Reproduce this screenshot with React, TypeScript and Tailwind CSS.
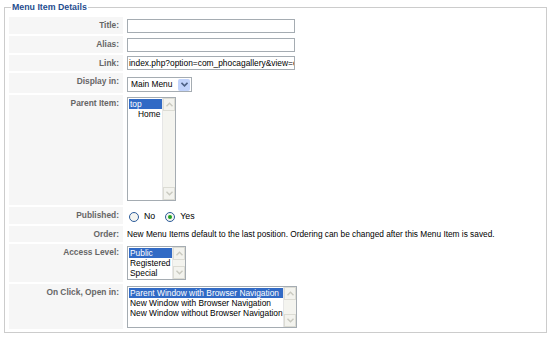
import React from "react";

const sans = { fontFamily: "'Liberation Sans', Arial, sans-serif" };

function Row({ label, h, children }: { label: string; h: string; children?: React.ReactNode }) {
  return (
    <div className={`flex ${h}`}>
      <div className="w-[114px] shrink-0 bg-[#f6f6f6] pr-[4px] pt-[3px] text-right text-[8.4px] font-bold leading-[11px] text-[#666]">
        {label}
      </div>
      <div className="flex flex-1 items-start pl-[4px] pt-[2px]">{children}</div>
    </div>
  );
}

function ScrollBar() {
  return (
    <div className="flex w-[13px] shrink-0 flex-col border-l border-[#e6e6e6] bg-[#f4f4ef]">
      <div className="flex h-[13px] items-center justify-center border border-[#dcdcd4] bg-[#f3f3ee]">
        <svg width="7" height="5" viewBox="0 0 7 5"><path d="M0.5 4.2 L3.5 1.2 L6.5 4.2" stroke="#c9c9bf" strokeWidth="1.4" fill="none" /></svg>
      </div>
      <div className="flex-1" />
      <div className="flex h-[13px] items-center justify-center border border-[#dcdcd4] bg-[#f3f3ee]">
        <svg width="7" height="5" viewBox="0 0 7 5"><path d="M0.5 0.8 L3.5 3.8 L6.5 0.8" stroke="#c9c9bf" strokeWidth="1.4" fill="none" /></svg>
      </div>
    </div>
  );
}

function ListBox({ w, h, items }: { w: string; h: string; items: { t: string; sel?: boolean; indent?: boolean }[] }) {
  return (
    <div className={`flex ${w} ${h} border border-[#a5acb2] bg-white`}>
      <div className="flex-1 whitespace-nowrap pl-[1px] pt-[1px] text-[8.4px] leading-[10px] text-black">
        {items.map((it) => (
          <div
            key={it.t}
            className={`${it.sel ? "bg-[#316ac5] text-white" : ""} ${it.indent ? "pl-[9px]" : "pl-[1px]"}`}
          >
            {it.t}
          </div>
        ))}
      </div>
      <ScrollBar />
    </div>
  );
}

function TextInput({ value }: { value?: string }) {
  return (
    <div className="h-[14px] w-[168px] overflow-hidden whitespace-nowrap border border-[#a5acb2] bg-white pl-[1px] text-[8.4px] leading-[12px] text-black">
      {value}
    </div>
  );
}

function Radio({ checked }: { checked?: boolean }) {
  return (
    <span className="inline-flex h-[10px] w-[10px] items-center justify-center rounded-full border border-[#2b5b9a] bg-[#f4f4f0]">
      {checked && <span className="h-[4px] w-[4px] rounded-full bg-[#21a121]" />}
    </span>
  );
}

export default function App() {
  return (
    <div className="h-[344px] w-[552px] overflow-hidden bg-white" style={sans}>
      <fieldset className="ml-[4px] h-[333px] w-[543px] border border-[#cccccc] px-[4px] pb-0">
        <legend className="ml-[2px] px-[1px] text-[8.8px] font-bold leading-[14px] text-[#1f4e8f]">
          Menu Item Details
        </legend>
        <div className="mt-[3px] flex flex-col gap-[2px]">
          <Row label="Title:" h="h-[17px]">
            <TextInput />
          </Row>
          <Row label="Alias:" h="h-[17px]">
            <TextInput />
          </Row>
          <Row label="Link:" h="h-[16px]">
            <div className="-mt-[1px]">
              <TextInput value="index.php?option=com_phocagallery&view=ca" />
            </div>
          </Row>
          <Row label="Display in:" h="h-[20px]">
            <div className="mt-[2px] flex h-[15px] w-[65px] items-center border border-[#a5acb2] bg-white text-[8.4px] text-black">
              <span className="flex-1 pl-[3px]">Main Menu</span>
              <span className="mr-[1px] flex h-[12px] w-[12px] items-center justify-center rounded-[2px] bg-[#c1d3fb]">
                <svg width="7" height="5" viewBox="0 0 7 5"><path d="M0.5 0.8 L3.5 3.8 L6.5 0.8" stroke="#4d6185" strokeWidth="1.6" fill="none" /></svg>
              </span>
            </div>
          </Row>
          <Row label="Parent Item:" h="h-[110px]">
            <ListBox w="w-[49px]" h="h-[104px]" items={[{ t: "top", sel: true }, { t: "Home", indent: true }]} />
          </Row>
          <Row label="Published:" h="h-[17px]">
            <div className="mt-[1px] flex items-center gap-[5px] text-[8.8px] text-black">
              <span className="ml-[2px] flex"><Radio /></span>
              <span>No</span>
              <span className="ml-[5px] flex"><Radio checked /></span>
              <span>Yes</span>
            </div>
          </Row>
          <Row label="Order:" h="h-[16px]">
            <div className="pt-[1px] text-[8.3px] leading-[11px] text-black">
              New Menu Items default to the last position. Ordering can be changed after this Menu Item is saved.
            </div>
          </Row>
          <Row label="Access Level:" h="h-[38px]">
            <ListBox w="w-[59px]" h="h-[34px]" items={[{ t: "Public", sel: true }, { t: "Registered" }, { t: "Special" }]} />
          </Row>
          <Row label="On Click, Open in:" h="h-[45px]">
            <ListBox
              w="w-[170px]"
              h="h-[42px]"
              items={[
                { t: "Parent Window with Browser Navigation", sel: true },
                { t: "New Window with Browser Navigation" },
                { t: "New Window without Browser Navigation" },
              ]}
            />
          </Row>
        </div>
      </fieldset>
    </div>
  );
}
